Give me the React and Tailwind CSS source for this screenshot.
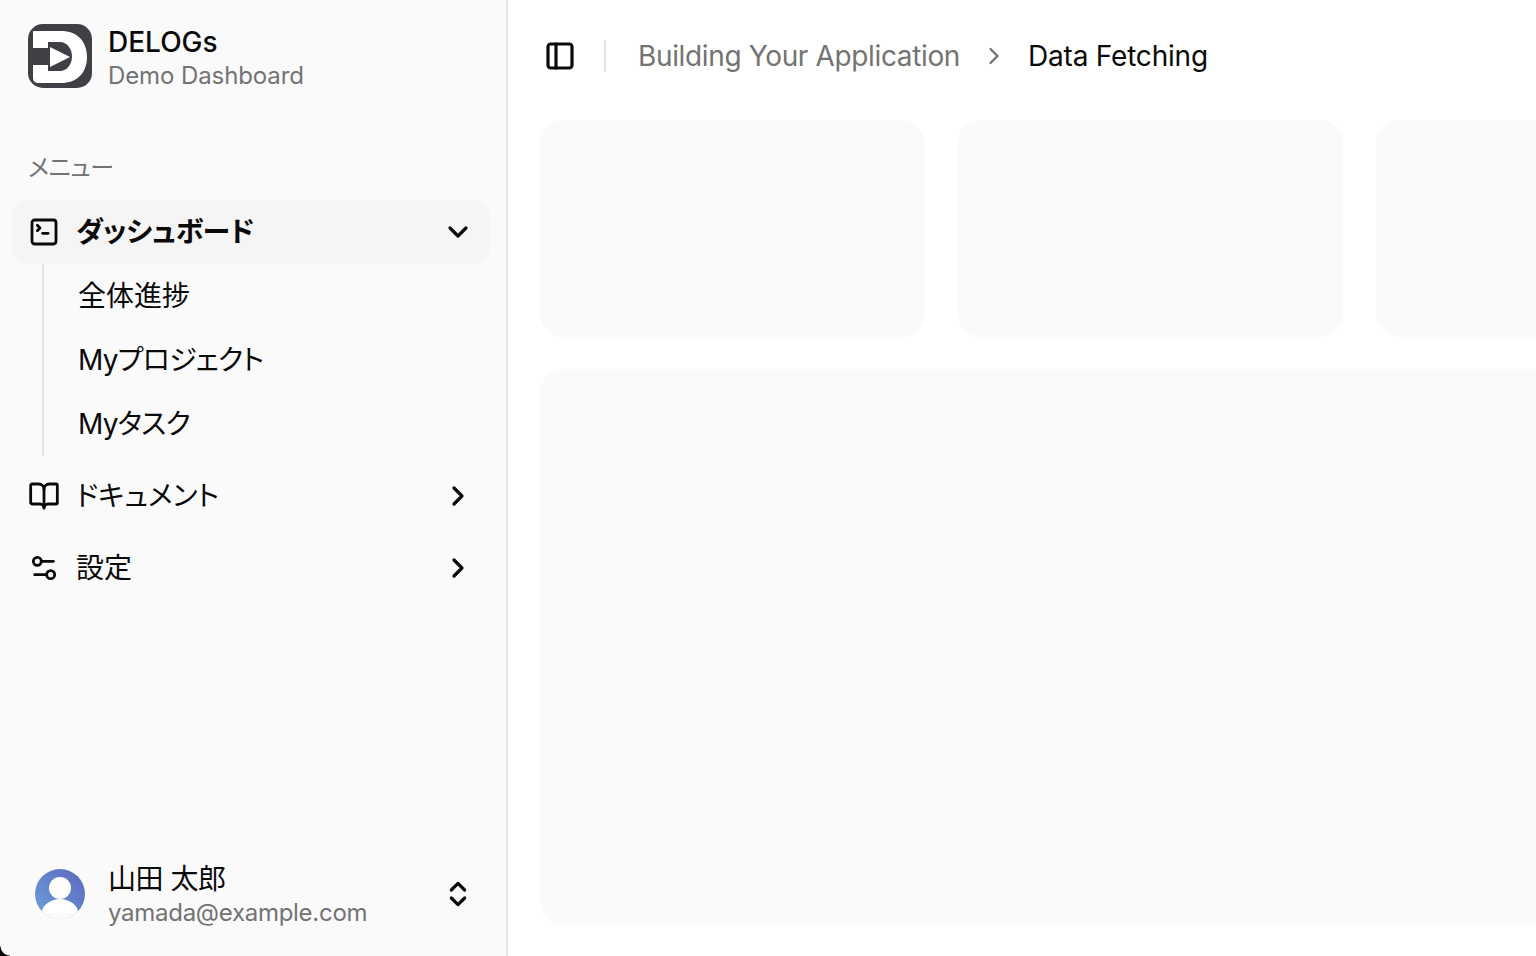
import React from "react";
import { SquareTerminal, BookOpen, Settings2, ChevronDown, ChevronRight, ChevronsUpDown, PanelLeft } from "lucide-react";

function Logo() {
  return (
    <svg width="64" height="64" viewBox="0 0 64 64" className="shrink-0">
      <rect x="0" y="0" width="64" height="64" rx="15" fill="#3f3f46" />
      <path d="M5 7H33C49 7 59 17 59 33C59 49 49 59 33 59H11C7 59 5 57 5 54V41H20V24H5Z" fill="#ffffff" />
      <path d="M20 18H32C39 18 44 25 44 32.5C44 40 39 47 32 47H20Z" fill="#3f3f46" />
      <path d="M22 23L42 33L22 43Z" fill="#ffffff" />
    </svg>
  );
}

function Avatar() {
  return (
    <svg width="52" height="52" viewBox="0 0 52 52" className="shrink-0">
      <defs>
        <linearGradient id="av" x1="0" y1="1" x2="1" y2="0">
          <stop offset="0" stopColor="#6ea0d8" />
          <stop offset="1" stopColor="#5b68bd" />
        </linearGradient>
        <clipPath id="avc"><circle cx="26" cy="26" r="25" /></clipPath>
      </defs>
      <circle cx="26" cy="26" r="25" fill="url(#av)" />
      <g clipPath="url(#avc)">
        <circle cx="26" cy="20" r="11" fill="#fff" />
        <ellipse cx="26" cy="46" rx="18.5" ry="15" fill="#fff" />
        <rect x="0" y="45" width="52" height="7" fill="#fafafa" />
      </g>
    </svg>
  );
}

function Card({ className }) {
  return <div className={"rounded-[24px] bg-[#fafafa] " + className} />;
}

export default function App() {
  return (
    <div className="relative flex h-[956px] w-[1536px] overflow-hidden bg-white text-[#0a0a0a] [font-feature-settings:'palt'] font-['Inter','Noto_Sans_CJK_JP',sans-serif]">
      <aside className="flex w-[508px] shrink-0 flex-col border-r-2 border-[#e5e5e5] bg-[#fafafa]">
        <div className="flex h-[112px] shrink-0 items-center gap-4 pl-[28px]">
          <Logo />
          <div className="flex flex-col pt-[6px]">
            <span className="text-[28px] leading-[34px] font-medium">DELOGs</span>
            <span className="text-[24px] leading-[34px] tracking-[-0.1px] text-[#737373]">Demo Dashboard</span>
          </div>
        </div>
        <div className="flex h-[88px] shrink-0 items-center pl-[28px] pt-[24px]">
          <span className="text-[24px] tracking-[-0.3px] text-[#737373]">メニュー</span>
        </div>
        <nav className="flex w-[490px] flex-col pl-[12px]">
          <div className="flex h-[64px] items-center rounded-[16px] bg-[#f5f5f5] pl-[16px] pr-[16px] font-semibold">
            <SquareTerminal size={32} strokeWidth={2.1} className="shrink-0" />
            <span className="ml-[16px] text-[28px] tracking-[-0.3px]">ダッシュボード</span>
            <ChevronDown size={32} strokeWidth={2.4} className="ml-auto" />
          </div>
          <div className="ml-[30px] flex flex-col border-l-2 border-[#e5e5e5] pl-[34px]">
            <a className="flex h-[64px] items-center text-[28px]">全体進捗</a>
            <a className="flex h-[64px] items-center text-[28px] tracking-[-0.75px]">Myプロジェクト</a>
            <a className="flex h-[64px] items-center text-[28px] tracking-[-0.8px]">Myタスク</a>
          </div>
          <div className="mt-[8px] flex h-[64px] items-center pl-[16px] pr-[16px]">
            <BookOpen size={32} strokeWidth={2.1} className="shrink-0" />
            <span className="ml-[16px] text-[28px]">ドキュメント</span>
            <ChevronRight size={32} strokeWidth={2.4} className="ml-auto" />
          </div>
          <div className="mt-[8px] flex h-[64px] items-center pl-[16px] pr-[16px]">
            <Settings2 size={32} strokeWidth={2.1} className="shrink-0" />
            <span className="ml-[16px] text-[28px]">設定</span>
            <ChevronRight size={32} strokeWidth={2.4} className="ml-auto" />
          </div>
        </nav>
        <div className="mt-auto mb-[22px] flex h-[80px] w-[490px] items-center pl-[34px] pr-[16px]">
          <Avatar />
          <div className="ml-[22px] flex flex-col pt-[4px]">
            <span className="text-[28px] leading-[34px] tracking-[-0.5px]">山田 太郎</span>
            <span className="text-[24px] leading-[34px] tracking-[-0.28px] text-[#737373]">yamada@example.com</span>
          </div>
          <ChevronsUpDown size={32} strokeWidth={2.4} className="ml-auto" />
        </div>
      </aside>
      <main className="flex w-[1284px] shrink-0 flex-col">
        <header className="flex h-[112px] shrink-0 items-center pl-[36px]">
          <PanelLeft size={32} strokeWidth={2.4} />
          <div className="ml-[28px] h-[32px] w-[2px] bg-[#e5e5e5]" />
          <span className="ml-[32px] text-[28px] tracking-[-0.36px] text-[#737373]">Building Your Application</span>
          <ChevronRight size={28} strokeWidth={2} className="ml-[20px] text-[#737373]" />
          <span className="ml-[20px] text-[28px] tracking-[-0.2px]">Data Fetching</span>
        </header>
        <div className="flex flex-col gap-[32px] px-[32px] pt-[8px]">
          <div className="grid grid-cols-3 gap-[32px]">
            <Card className="h-[217px]" />
            <Card className="h-[217px]" />
            <Card className="ml-[1px] h-[217px]" />
          </div>
          <Card className="h-[556px]" />
        </div>
      </main>
      <div className="absolute bottom-0 left-0 h-[10px] w-[10px] bg-[radial-gradient(circle_at_100%_0%,transparent_9px,#000_10px)]" />
    </div>
  );
}
